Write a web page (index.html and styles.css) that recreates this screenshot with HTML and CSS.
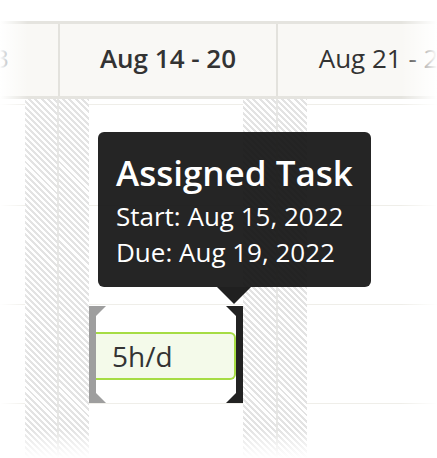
FILE: index.html
```html
<!DOCTYPE html>
<html lang="en">
<head>
    <meta charset="UTF-8">
    <meta name="viewport" content="width=device-width, initial-scale=1.0">
    <title>Schedule</title>
    <link rel="stylesheet" href="styles.css">
</head>
<body>
    <div class="board">
        <div class="timeline-head">
            <div class="week">Aug 7 - 13</div>
            <div class="week current">Aug 14 - 20</div>
            <div class="week">Aug 21 - 27</div>
        </div>

        <div class="timeline-body">
            <div class="row row-0"></div>
            <div class="row row-1"></div>
            <div class="row row-2"></div>
            <div class="row row-3"></div>

            <div class="day weekend sat-13"></div>
            <div class="day weekend sun sun-14"></div>
            <div class="day weekend sat-20"></div>
            <div class="day weekend sun sun-21"></div>

            <div class="task">
                <div class="bracket bracket-start"></div>
                <div class="task-bar">5h/d</div>
                <div class="bracket bracket-end"></div>
            </div>
        </div>

        <div class="tooltip">
            <div class="tooltip-title">Assigned Task</div>
            <div class="tooltip-line">Start: Aug 15, 2022</div>
            <div class="tooltip-line">Due: Aug 19, 2022</div>
        </div>

        <div class="fade fade-left"></div>
        <div class="fade fade-right"></div>
        <div class="fade fade-bottom"></div>
    </div>
</body>
</html>
```

FILE: styles.css
```css
body {
    margin: 0;
    padding: 0;
    background-color: #fff;
    font-family: "Open Sans", "Noto Sans", sans-serif;
    color: #333;
}
.board {
    position: relative;
    width: 437px;
    height: 458px;
    overflow: hidden;
    padding-top: 21px;
    box-sizing: border-box;
}

/* week header */
.timeline-head {
    display: flex;
    margin-left: -160px;
    height: 78px;
    box-sizing: border-box;
    background-color: #f9f8f5;
    border-top: 3px solid #e5e4df;
    border-bottom: 3px solid #e5e4df;
}
.week {
    flex: 0 0 218px;
    display: flex;
    align-items: center;
    justify-content: center;
    padding-bottom: 4px;
    box-sizing: border-box;
    font-size: 26px;
    white-space: nowrap;
    color: #333;
}
.week + .week {
    border-left: 2px solid #e3e2dd;
}
.week.current {
    font-weight: 600;
}

/* body grid */
.timeline-body {
    display: grid;
    grid-template-columns: 25px 32px 32px 31px 31px 31px 30px 31px 33px 31px 1fr;
    grid-template-rows: 6px 101px 99px 99px 1fr;
    height: 359px;
}
.row {
    grid-column: 1 / -1;
    border-bottom: 1px solid #efeee9;
}
.row-0 { grid-row: 1; }
.row-1 { grid-row: 2; }
.row-2 { grid-row: 3; }
.row-3 { grid-row: 4; }

.day {
    grid-row: 1 / -1;
}
.weekend {
    background: repeating-linear-gradient(45deg, #fff 0 2.2px, #e3e3e3 2.2px 4.3px);
}
.sun {
    border-left: 2px solid #e6e6e4;
}
.sat-13 { grid-column: 2; }
.sun-14 { grid-column: 3; }
.sat-20 { grid-column: 9; }
.sun-21 { grid-column: 10; }

/* task */
.task {
    grid-row: 4;
    grid-column: 4 / 9;
    margin: 1px 0 0;
    height: 97px;
    display: flex;
    background-color: #fff;
    position: relative;
    z-index: 1;
}
.bracket {
    flex: 0 0 7px;
    position: relative;
}
.bracket-start {
    background-color: #9e9e9e;
}
.bracket-end {
    background-color: #222;
}
.bracket::before,
.bracket::after {
    content: '';
    position: absolute;
    width: 0;
    height: 0;
    border-style: solid;
}
.bracket-start::before {
    top: 0;
    left: 7px;
    border-width: 10px 10px 0 0;
    border-color: #9e9e9e transparent transparent transparent;
}
.bracket-start::after {
    bottom: 0;
    left: 7px;
    border-width: 10px 0 0 10px;
    border-color: transparent transparent transparent #9e9e9e;
}
.bracket-end::before {
    top: 0;
    right: 7px;
    border-width: 0 10px 10px 0;
    border-color: transparent #222 transparent transparent;
}
.bracket-end::after {
    bottom: 0;
    right: 7px;
    border-width: 0 0 10px 10px;
    border-color: transparent transparent #222 transparent;
}
.task-bar {
    flex: 1;
    align-self: center;
    height: 48px;
    box-sizing: border-box;
    margin-top: 2px;
    display: flex;
    align-items: center;
    padding-left: 16px;
    background-color: #f4faea;
    border: 2px solid #a6dc44;
    border-left: none;
    border-radius: 0 6px 6px 0;
    font-size: 28px;
    color: #333;
}

/* tooltip */
.tooltip {
    position: absolute;
    left: 98px;
    top: 132px;
    width: 273px;
    height: 155px;
    box-sizing: border-box;
    padding: 19px 12px 17px 18px;
    background-color: rgba(20, 20, 20, 0.93);
    border-radius: 6px;
    color: #fff;
    white-space: nowrap;
    z-index: 3;
}
.tooltip::after {
    content: '';
    position: absolute;
    left: 119px;
    bottom: -17px;
    border-left: 17px solid transparent;
    border-right: 17px solid transparent;
    border-top: 17px solid rgba(20, 20, 20, 0.95);
}
.tooltip-title {
    font-size: 35px;
    line-height: 44px;
    font-weight: 600;
    margin-bottom: 3px;
}
.tooltip-line {
    font-size: 26px;
    line-height: 36px;
}

/* edge fades */
.fade {
    position: absolute;
    z-index: 4;
}
.fade-left {
    left: 0;
    top: 0;
    bottom: 0;
    width: 28px;
    background: linear-gradient(to right, #fff, rgba(255, 255, 255, 0));
}
.fade-right {
    right: 0;
    top: 0;
    bottom: 0;
    width: 36px;
    background: linear-gradient(to left, #fff, rgba(255, 255, 255, 0));
}
.fade-bottom {
    left: 0;
    right: 0;
    bottom: 0;
    height: 28px;
    background: linear-gradient(to top, #fff, rgba(255, 255, 255, 0));
}
```
